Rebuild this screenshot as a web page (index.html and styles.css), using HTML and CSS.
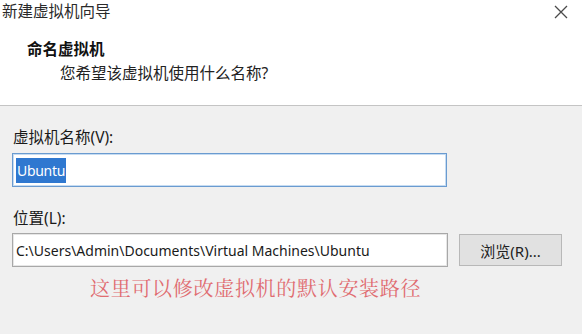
FILE: index.html
```html
<!DOCTYPE html>
<html lang="zh-CN">

<head>
    <meta charset="UTF-8">
    <meta name="viewport" content="width=device-width, initial-scale=1.0">
    <title>新建虚拟机向导</title>
    <link rel="stylesheet" href="styles.css">
</head>

<body>
    <div class="dialog">
        <div class="header">
            <div class="titlebar">
                <span class="title">新建虚拟机向导</span>
                <span class="close">
                    <svg width="14" height="14" viewBox="0 0 14 14">
                        <path d="M1 1 L13 13 M13 1 L1 13" stroke="#4a4a4a" stroke-width="1.3" fill="none" />
                    </svg>
                </span>
            </div>
            <h2 class="heading">命名虚拟机</h2>
            <p class="subtitle">您希望该虚拟机使用什么名称?</p>
        </div>

        <div class="content">
            <label class="label">虚拟机名称(V):</label>
            <div class="field field-focus"><span class="selected">Ubuntu</span></div>

            <label class="label label-second">位置(L):</label>
            <div class="row">
                <div class="field field-path">C:\Users\Admin\Documents\Virtual Machines\Ubuntu</div>
                <div class="button">浏览(R)...</div>
            </div>

            <p class="note">这里可以修改虚拟机的默认安装路径</p>
        </div>
    </div>
</body>

</html>
```

FILE: styles.css
```css
* {
    box-sizing: border-box;
}

body {
    margin: 0;
    width: 582px;
    height: 334px;
    overflow: hidden;
    font-family: "Noto Sans", "Noto Sans CJK SC", sans-serif;
    font-size: 15.5px;
    color: #1a1a1a;
    background: #f0f0f0;
}

.dialog {
    display: flex;
    flex-direction: column;
    height: 334px;
}

.header {
    height: 106px;
    background: #ffffff;
    border-bottom: 1px solid #c4c4c4;
}

.titlebar {
    display: flex;
    justify-content: space-between;
    align-items: center;
    height: 22px;
    padding-left: 2px;
    padding-right: 14px;
}

.title {
    font-size: 15.5px;
    color: #2a2a2a;
    line-height: 22px;
}

.close {
    display: flex;
    margin-top: 2px;
}

.heading {
    margin: 16px 0 0 27px;
    font-size: 15.5px;
    font-weight: 700;
    line-height: 22px;
    color: #111;
}

.subtitle {
    margin: 2px 0 0 60px;
    line-height: 22px;
    color: #222;
}

.content {
    flex: 1;
    padding: 20px 12px 0 12px;
    display: flex;
    flex-direction: column;
}

.label {
    display: block;
    line-height: 22px;
    padding-left: 1px;
    margin-bottom: 5px;
}

.label-second {
    margin-top: 20px;
    margin-bottom: 4px;
}

.field {
    height: 34px;
    width: 435px;
    background: #ffffff;
    display: flex;
    align-items: center;
    padding-left: 3px;
    font-size: 14px;
}

.field-focus {
    border: 1px solid #6a9bd0;
    box-shadow: inset 0 0 0 1px #c6dcf2;
}

.selected {
    background: #2f78d0;
    color: #ffffff;
    line-height: 25px;
    padding: 0 1px;
    letter-spacing: -0.3px;
}

.row {
    display: flex;
    align-items: center;
    gap: 11px;
}

.field-path {
    width: 436px;
    border: 1px solid #a8a8a8;
    box-shadow: inset 0 0 0 1px #e6e6e6;
    color: #1a1a1a;
}

.button {
    width: 103px;
    height: 32px;
    background: #e1e1e1;
    border: 1px solid #b8b8b8;
    display: flex;
    align-items: center;
    justify-content: center;
    font-size: 15px;
    color: #222;
}

.note {
    margin: 8px 0 0 78px;
    font-family: "Noto Serif CJK SC", "Liberation Serif", "Noto Sans CJK SC", serif;
    font-size: 20px;
    line-height: 26px;
    letter-spacing: 0.7px;
    color: #e06c70;
}
```
